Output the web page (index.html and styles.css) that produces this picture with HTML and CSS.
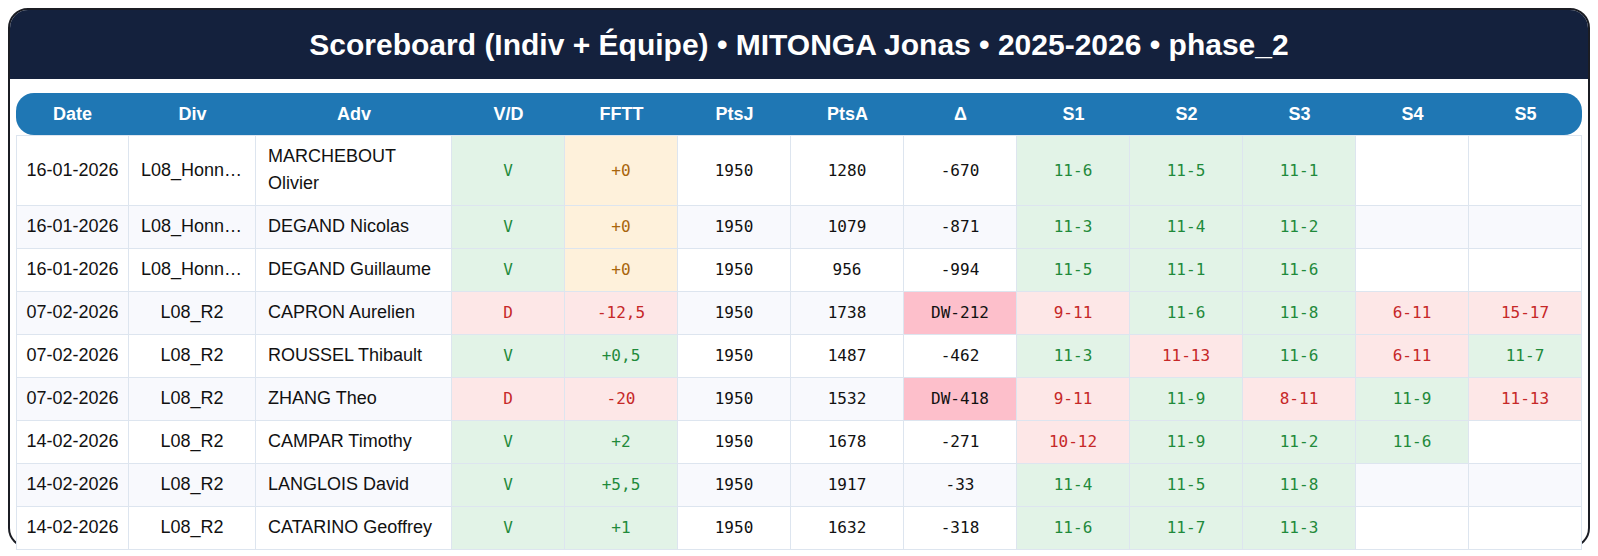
FILE: index.html
```html
<!DOCTYPE html>
<html lang="fr">
<head>
<meta charset="utf-8">
<title>Scoreboard</title>
<link rel="stylesheet" href="styles.css">
</head>
<body>
<div class="card">
  <div class="card-head">Scoreboard (Indiv + Équipe) • MITONGA Jonas • 2025-2026 • phase_2</div>
  <div class="card-body">
    <table class="board">
      <colgroup>
        <col class="c-date"><col class="c-div"><col class="c-adv">
        <col class="c-n"><col class="c-n"><col class="c-n"><col class="c-n"><col class="c-n">
        <col class="c-n"><col class="c-n"><col class="c-n"><col class="c-n"><col class="c-n">
      </colgroup>
      <thead>
        <tr><th>Date</th><th>Div</th><th>Adv</th><th>V/D</th><th>FFTT</th><th>PtsJ</th><th>PtsA</th><th>Δ</th><th>S1</th><th>S2</th><th>S3</th><th>S4</th><th>S5</th></tr>
      </thead>
      <tbody>
        <tr><td>16-01-2026</td><td class="div">L08_Honneur</td><td class="adv">MARCHEBOUT Olivier</td><td class="m win">V</td><td class="m zero">+0</td><td class="m">1950</td><td class="m">1280</td><td class="m">-670</td><td class="m win">11-6</td><td class="m win">11-5</td><td class="m win">11-1</td><td class="m"></td><td class="m"></td></tr>
        <tr><td>16-01-2026</td><td class="div">L08_Honneur</td><td class="adv">DEGAND Nicolas</td><td class="m win">V</td><td class="m zero">+0</td><td class="m">1950</td><td class="m">1079</td><td class="m">-871</td><td class="m win">11-3</td><td class="m win">11-4</td><td class="m win">11-2</td><td class="m"></td><td class="m"></td></tr>
        <tr><td>16-01-2026</td><td class="div">L08_Honneur</td><td class="adv">DEGAND Guillaume</td><td class="m win">V</td><td class="m zero">+0</td><td class="m">1950</td><td class="m">956</td><td class="m">-994</td><td class="m win">11-5</td><td class="m win">11-1</td><td class="m win">11-6</td><td class="m"></td><td class="m"></td></tr>
        <tr><td>07-02-2026</td><td class="div">L08_R2</td><td class="adv">CAPRON Aurelien</td><td class="m loss">D</td><td class="m loss">-12,5</td><td class="m">1950</td><td class="m">1738</td><td class="m dw">DW-212</td><td class="m loss">9-11</td><td class="m win">11-6</td><td class="m win">11-8</td><td class="m loss">6-11</td><td class="m loss">15-17</td></tr>
        <tr><td>07-02-2026</td><td class="div">L08_R2</td><td class="adv">ROUSSEL Thibault</td><td class="m win">V</td><td class="m win">+0,5</td><td class="m">1950</td><td class="m">1487</td><td class="m">-462</td><td class="m win">11-3</td><td class="m loss">11-13</td><td class="m win">11-6</td><td class="m loss">6-11</td><td class="m win">11-7</td></tr>
        <tr><td>07-02-2026</td><td class="div">L08_R2</td><td class="adv">ZHANG Theo</td><td class="m loss">D</td><td class="m loss">-20</td><td class="m">1950</td><td class="m">1532</td><td class="m dw">DW-418</td><td class="m loss">9-11</td><td class="m win">11-9</td><td class="m loss">8-11</td><td class="m win">11-9</td><td class="m loss">11-13</td></tr>
        <tr><td>14-02-2026</td><td class="div">L08_R2</td><td class="adv">CAMPAR Timothy</td><td class="m win">V</td><td class="m win">+2</td><td class="m">1950</td><td class="m">1678</td><td class="m">-271</td><td class="m loss">10-12</td><td class="m win">11-9</td><td class="m win">11-2</td><td class="m win">11-6</td><td class="m"></td></tr>
        <tr><td>14-02-2026</td><td class="div">L08_R2</td><td class="adv">LANGLOIS David</td><td class="m win">V</td><td class="m win">+5,5</td><td class="m">1950</td><td class="m">1917</td><td class="m">-33</td><td class="m win">11-4</td><td class="m win">11-5</td><td class="m win">11-8</td><td class="m"></td><td class="m"></td></tr>
        <tr><td>14-02-2026</td><td class="div">L08_R2</td><td class="adv">CATARINO Geoffrey</td><td class="m win">V</td><td class="m win">+1</td><td class="m">1950</td><td class="m">1632</td><td class="m">-318</td><td class="m win">11-6</td><td class="m win">11-7</td><td class="m win">11-3</td><td class="m"></td><td class="m"></td></tr>
      </tbody>
    </table>
  </div>
</div>
</body>
</html>
```

FILE: styles.css
```css
html, body {
  margin: 0;
  padding: 0;
  background: #ffffff;
}
body {
  padding: 8px;
  font-family: "Liberation Sans", Arial, sans-serif;
  color: #111111;
}
.card {
  box-sizing: border-box;
  height: calc(100vh - 16px);
  border: 2px solid #1b1d24;
  border-radius: 20px;
  background: #ffffff;
}
.card-head {
  background: #14213d;
  color: #ffffff;
  font-weight: 700;
  font-size: 30px;
  line-height: 37px;
  padding: 16px 20px;
  text-align: center;
  border-radius: 18px 18px 0 0;
}
.card-body {
  padding: 14px 6px 0;
}
.board {
  width: 1566px;
  table-layout: fixed;
  border-collapse: separate;
  border-spacing: 0;
  font-size: 18px;
}
.c-date { width: 113px; }
.c-div { width: 127px; }
.c-adv { width: 196px; }
.c-n { width: 113px; }

.board th {
  background: #1f77b4;
  color: #ffffff;
  font-weight: 700;
  font-size: 18px;
  line-height: 22px;
  padding: 10px 6px;
  text-align: center;
}
.board th:first-child {
  border-radius: 18px 0 0 18px;
}
.board th:last-child {
  border-radius: 0 18px 18px 0;
}
.board td {
  padding: 7px 12px 8px;
  line-height: 27px;
  text-align: center;
  vertical-align: middle;
  white-space: nowrap;
  border-right: 1px solid #dde5ef;
  border-bottom: 1px solid #dde5ef;
  background: #ffffff;
}
.board td:first-child {
  border-left: 1px solid #dde5ef;
  padding-left: 6px;
  padding-right: 6px;
}
.board tbody tr:first-child td {
  border-top: 1px solid #dde5ef;
}
.board tbody tr:nth-child(even) td {
  background: #f8f9fd;
}
.board td.div {
  overflow: hidden;
  text-overflow: ellipsis;
}
.board td.adv {
  text-align: left;
  white-space: normal;
}
.board td.m {
  font-family: "DejaVu Sans Mono", monospace;
  font-size: 16px;
}
.board tbody tr td.win {
  background: #e2f3e7;
  color: #1f8a3b;
}
.board tbody tr td.loss {
  background: #fde7e7;
  color: #c62828;
}
.board tbody tr td.zero {
  background: #fef1db;
  color: #a8650c;
}
.board tbody tr td.dw {
  background: #fdbfcb;
  color: #111111;
}
```
